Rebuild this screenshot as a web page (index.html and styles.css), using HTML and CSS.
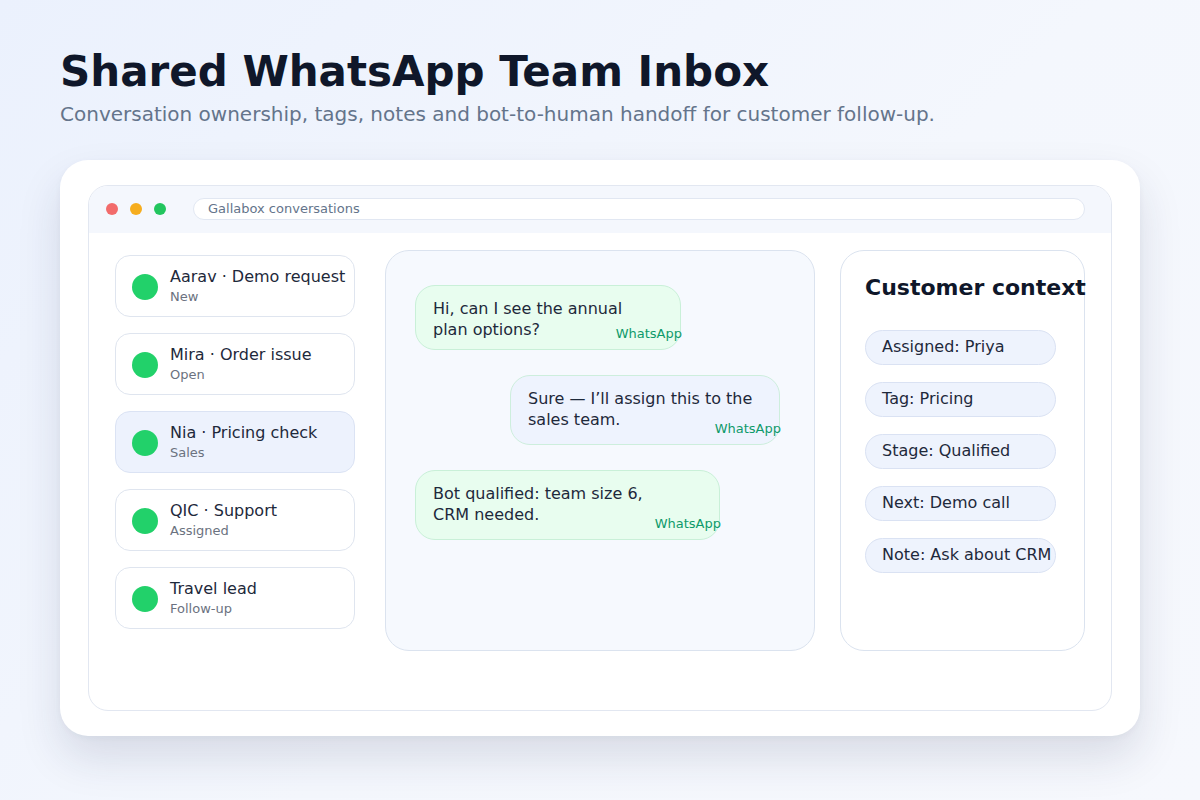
FILE: index.html
```html
<!DOCTYPE html>
<html lang="en">
<head>
<meta charset="utf-8">
<title>Shared WhatsApp Team Inbox</title>
<link rel="stylesheet" href="styles.css">
</head>
<body>
<header class="hero">
  <h1 class="title">Shared WhatsApp Team Inbox</h1>
  <p class="subtitle">Conversation ownership, tags, notes and bot-to-human handoff for customer follow-up.</p>
</header>
<section class="card">
  <div class="frame">
    <div class="topbar">
      <span class="dot dot-red"></span>
      <span class="dot dot-yellow"></span>
      <span class="dot dot-green"></span>
      <div class="address">Gallabox conversations</div>
    </div>
    <div class="content">
      <ul class="list">
        <li class="item"><span class="avatar"></span><div class="item-text"><div class="name">Aarav · Demo request</div><div class="meta">New</div></div></li>
        <li class="item"><span class="avatar"></span><div class="item-text"><div class="name">Mira · Order issue</div><div class="meta">Open</div></div></li>
        <li class="item item-active"><span class="avatar"></span><div class="item-text"><div class="name">Nia · Pricing check</div><div class="meta">Sales</div></div></li>
        <li class="item"><span class="avatar"></span><div class="item-text"><div class="name">QIC · Support</div><div class="meta">Assigned</div></div></li>
        <li class="item"><span class="avatar"></span><div class="item-text"><div class="name">Travel lead</div><div class="meta">Follow-up</div></div></li>
      </ul>
      <div class="chat">
        <div class="bubble bubble-in bubble-1">Hi, can I see the annual<br>plan options?<span class="channel">WhatsApp</span></div>
        <div class="bubble bubble-out bubble-2">Sure — I’ll assign this to the<br>sales team.<span class="channel">WhatsApp</span></div>
        <div class="bubble bubble-in bubble-3">Bot qualified: team size 6,<br>CRM needed.<span class="channel">WhatsApp</span></div>
      </div>
      <aside class="context">
        <h2 class="context-title">Customer context</h2>
        <div class="pills">
          <div class="pill">Assigned: Priya</div>
          <div class="pill">Tag: Pricing</div>
          <div class="pill">Stage: Qualified</div>
          <div class="pill">Next: Demo call</div>
          <div class="pill">Note: Ask about CRM</div>
        </div>
      </aside>
    </div>
  </div>
</section>
</body>
</html>
```
FILE: styles.css
```css
* { box-sizing: border-box; }
html, body { margin: 0; padding: 0; }
body {
  width: 1200px;
  height: 800px;
  overflow: hidden;
  font-family: "DejaVu Sans", "Liberation Sans", sans-serif;
  background: linear-gradient(135deg, #ebf1fd 0%, #f4f7fd 55%, #f6f8fd 100%);
  color: #0f172a;
  padding: 47px 60px 0 60px;
}
.hero { margin: 0; }
.title {
  margin: 0;
  font-size: 42px;
  line-height: 50px;
  font-weight: 700;
  color: #0f172a;
}
.subtitle {
  margin: 5px 0 0 0;
  font-size: 20px;
  line-height: 24px;
  color: #64748b;
}
.card {
  margin-top: 34px;
  width: 1080px;
  height: 576px;
  background: #ffffff;
  border-radius: 28px;
  box-shadow: 0 22px 44px rgba(30, 41, 80, 0.13), 0 2px 6px rgba(30, 41, 80, 0.04);
  padding: 25px 28px;
}
.frame {
  height: 526px;
  border: 1px solid #e2e7f1;
  border-radius: 20px;
  overflow: hidden;
  background: #fff;
}
.topbar {
  height: 47px;
  background: #f4f7fd;
  display: flex;
  align-items: center;
  padding-left: 17px;
  padding-right: 26px;
}
.dot {
  width: 12px;
  height: 12px;
  border-radius: 50%;
  margin-right: 12px;
  margin-top: -1px;
  flex: none;
}
.dot-red { background: #f26b6b; }
.dot-yellow { background: #f6ad1e; }
.dot-green { background: #22c55e; margin-right: 27px; }
.address {
  flex: 1;
  height: 22px;
  margin-top: -1px;
  border: 1px solid #e1e7f2;
  background: #ffffff;
  border-radius: 11px;
  padding-left: 14px;
  font-size: 13px;
  line-height: 20px;
  color: #64748b;
}
.content {
  display: flex;
  align-items: flex-start;
  padding: 17px 0 0 26px;
}
.list {
  list-style: none;
  margin: 5px 30px 0 0;
  padding: 0;
  width: 240px;
  flex: none;
  display: flex;
  flex-direction: column;
  gap: 16px;
}
.item {
  height: 62px;
  border: 1px solid #dfe5ef;
  border-radius: 15px;
  background: #ffffff;
  display: flex;
  align-items: center;
  padding-left: 16px;
  gap: 12px;
}
.item-active {
  background: #edf2fd;
  border-color: #dbe3f4;
}
.avatar {
  width: 26px;
  height: 26px;
  border-radius: 50%;
  background: #22d16a;
  flex: none;
  margin-top: 2px;
}
.item-text { display: flex; flex-direction: column; gap: 1px; }
.name {
  font-size: 16px;
  line-height: 20px;
  color: #1e293b;
  white-space: nowrap;
}
.meta {
  font-size: 13px;
  line-height: 17px;
  color: #6b7280;
}
.chat {
  width: 430px;
  height: 401px;
  flex: none;
  background: #f6f9fe;
  border: 1px solid #dbe3ef;
  border-radius: 24px;
  padding: 34px 34px 0 29px;
  display: flex;
  flex-direction: column;
  align-items: flex-start;
  gap: 25px;
}
.bubble {
  position: relative;
  border-radius: 20px;
  font-size: 16px;
  line-height: 21px;
  color: #1e293b;
  padding: 12px 17px 10px 17px;
  white-space: nowrap;
}
.bubble-in {
  background: #e8fdef;
  border: 1px solid #c9f0d8;
}
.bubble-out {
  background: #eef3fe;
  border: 1px solid #cdeedd;
  align-self: flex-end;
}
.bubble-1 { width: 266px; height: 65px; }
.bubble-2 { width: 270px; height: 70px; }
.bubble-3 { width: 305px; height: 70px; }
.channel {
  position: absolute;
  right: -2px;
  bottom: 7px;
  font-size: 13px;
  line-height: 16px;
  color: #0e9a6a;
}
.context {
  margin-left: 25px;
  width: 245px;
  height: 401px;
  flex: none;
  border: 1px solid #dbe3ef;
  border-radius: 24px;
  background: #ffffff;
  padding: 25px 0 0 24px;
}
.context-title {
  margin: 0;
  font-size: 22px;
  line-height: 24px;
  font-weight: 700;
  color: #0f172a;
  white-space: nowrap;
}
.pills {
  margin-top: 30px;
  display: flex;
  flex-direction: column;
  gap: 17px;
}
.pill {
  width: 191px;
  height: 35px;
  border-radius: 17.5px;
  background: #eef3fd;
  border: 1px solid #dae2f3;
  padding-left: 16px;
  font-size: 16px;
  line-height: 32px;
  color: #1e293b;
  white-space: nowrap;
}
```
